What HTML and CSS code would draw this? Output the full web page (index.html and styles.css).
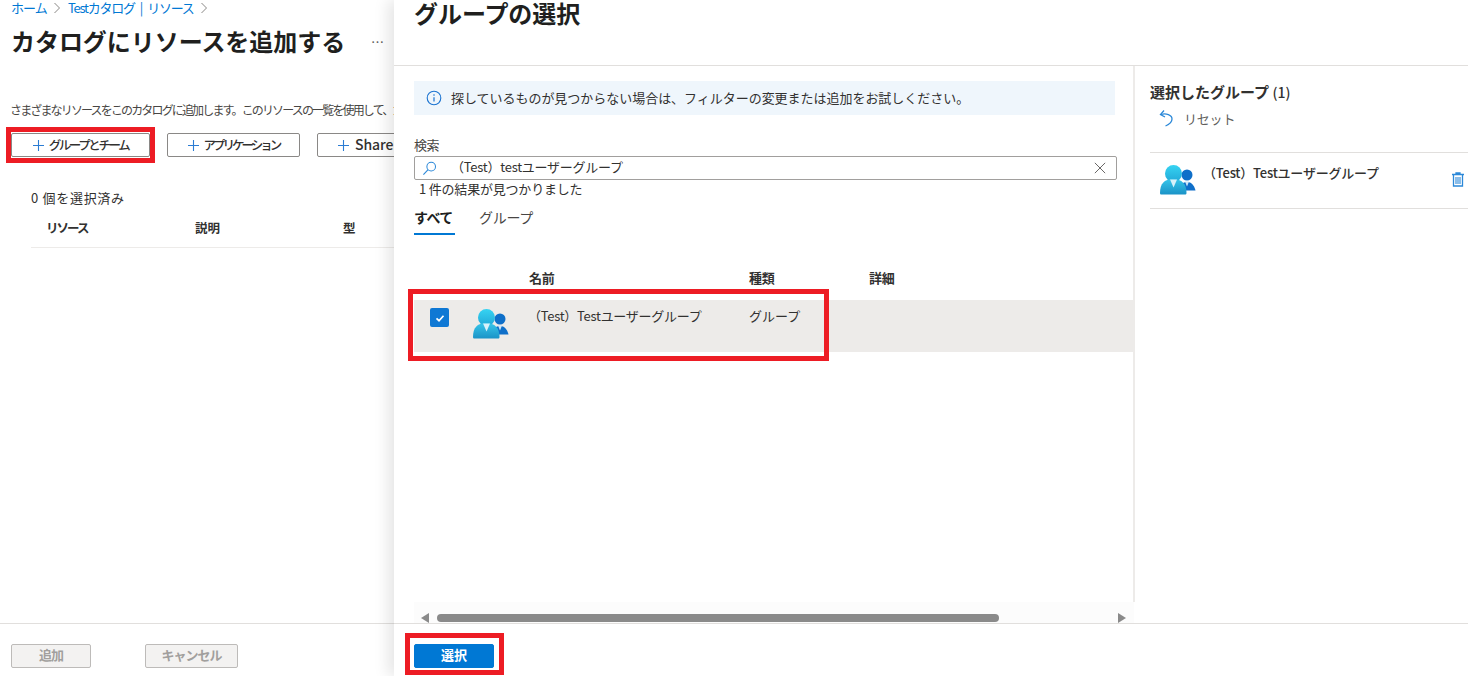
FILE: index.html
```html
<!DOCTYPE html>
<html lang="ja">
<head>
<meta charset="utf-8">
<title>カタログにリソースを追加する</title>
<link rel="stylesheet" href="styles.css">
</head>
<body>
<svg class="defs" width="0" height="0" aria-hidden="true">
  <defs>
    <linearGradient id="bodyGrad" x1="0" y1="0" x2="0" y2="1"><stop offset="0" stop-color="#37c6ea"/><stop offset="1" stop-color="#1b93c7"/></linearGradient>
    <linearGradient id="headGrad" x1="0" y1="0" x2="0" y2="1"><stop offset="0" stop-color="#36d3f2"/><stop offset="1" stop-color="#22a9d8"/></linearGradient>
    <symbol id="people" viewBox="0 0 36 30">
      <circle cx="27" cy="10" r="5.500" fill="#0f6fc9"/>
      <path d="M20 25c0-5 2.500-8 7-8s7 3 8.500 8.500H20z" fill="#0f6fc9"/>
      <path d="M25 16.500h4l-2 5z" fill="#cfe6f7"/>
      <circle cx="13.500" cy="8.500" r="8.500" fill="url(#headGrad)"/>
      <path d="M0 28c0-9 4-14 13-14s13.500 5 13.500 14c0 1-.6 1.500-1.500 1.500H1.500C.5 29.500 0 29 0 28z" fill="url(#bodyGrad)"/>
      <path d="M10 14.500h7l-3.500 8z" fill="#d9f1fa"/>
    </symbol>
    <symbol id="plus" viewBox="0 0 11 11"><path d="M5.500 0v11M0 5.500h11" stroke="#2b7cd3" stroke-width="1.100"/></symbol>
  </defs>
</svg>

<main class="blade">
  <section class="left">
    <nav class="crumbs">
      <a>ホーム</a><svg class="chev" viewBox="0 0 8 12"><path d="M1.500 1l5 5-5 5" fill="none" stroke="#8a8886"/></svg><a class="crumb-wide">Testカタログ | リソース</a><svg class="chev" viewBox="0 0 8 12"><path d="M1.500 1l5 5-5 5" fill="none" stroke="#8a8886"/></svg>
    </nav>
    <div class="title-row">
      <h1 class="title">カタログにリソースを追加する</h1>
      <span class="more">…</span>
    </div>
    <div class="left-body">
      <p class="desc">さまざまなリソースをこのカタログに追加します。このリソースの一覧を使用して、カタログのリソースを管理します。</p>
      <div class="actions">
        <button class="act act-group"><svg class="plus"><use href="#plus"/></svg><span class="act-label">グループとチーム</span></button>
        <button class="act act-app"><svg class="plus"><use href="#plus"/></svg><span class="act-label">アプリケーション</span></button>
        <button class="act act-share"><svg class="plus"><use href="#plus"/></svg><span class="act-label">SharePoint サイト</span></button>
      </div>
      <div class="selected">0 個を選択済み</div>
      <div class="res-head">
        <span class="rh-a">リソース</span><span class="rh-b">説明</span><span class="rh-c">型</span>
      </div>
    </div>
    <footer class="left-foot">
      <button class="off off-add">追加</button>
      <button class="off off-cancel">キャンセル</button>
    </footer>
  </section>

  <section class="panel">
    <h2 class="panel-title">グループの選択</h2>
    <div class="panel-main">
      <div class="pick">
        <div class="pick-inner">
          <div class="info">
            <svg class="info-ic" viewBox="0 0 16 16"><circle cx="8" cy="8" r="6.800" fill="none" stroke="#1a73d0" stroke-width="1.100"/><circle cx="8" cy="5" r=".8" fill="#1a73d0"/><path d="M8 7.200v4.300" stroke="#1a73d0" stroke-width="1.200"/></svg>
            <span class="info-text">探しているものが見つからない場合は、フィルターの変更または追加をお試しください。</span>
          </div>
          <label class="search-label">検索</label>
          <div class="search">
            <svg class="search-ic" viewBox="0 0 16 16"><circle cx="9.800" cy="6" r="4.600" fill="none" stroke="#2b88d8" stroke-width="1.100"/><path d="M6.500 9.300L1.500 14.500" stroke="#2b88d8" stroke-width="1.200"/></svg>
            <span class="search-text">（Test）testユーザーグループ</span>
            <svg class="close-ic" viewBox="0 0 14 14"><path d="M1 1l12 12M13 1L1 13" stroke="#605e5c" stroke-width="1.100"/></svg>
          </div>
          <div class="count">1 件の結果が見つかりました</div>
          <div class="tabs">
            <span class="tab tab-on">すべて</span>
            <span class="tab">グループ</span>
          </div>
        </div>
        <div class="thead">
          <span class="c-name">名前</span><span class="c-kind">種類</span><span class="c-detail">詳細</span>
        </div>
        <div class="row">
          <span class="check"><svg viewBox="0 0 12 12"><path d="M2.500 6.300l2.500 2.400 4.500-5" fill="none" stroke="#fff" stroke-width="1.700"/></svg></span>
          <svg class="row-ic"><use href="#people"/></svg>
          <span class="row-name">（Test）Testユーザーグループ</span>
          <span class="row-kind">グループ</span>
        </div>
      </div>
      <aside class="chosen">
        <h3 class="chosen-title">選択したグループ <span class="chosen-num">(1)</span></h3>
        <div class="reset">
          <svg class="reset-ic" viewBox="0 0 16 18"><path d="M5 1.500L1.500 5.500 6 8" fill="none" stroke="#2b88d8" stroke-width="1.300"/><path d="M2 5.500c5-1.500 11 .5 11 4.500 0 3-3 5.500-6.500 7" fill="none" stroke="#2b88d8" stroke-width="1.300"/></svg>
          <span>リセット</span>
        </div>
        <div class="chosen-item">
          <svg class="chosen-ic"><use href="#people"/></svg>
          <span class="chosen-name">（Test）Testユーザーグループ</span>
          <svg class="trash" viewBox="0 0 14 16"><path d="M1 3h12M5 3V1.500h4V3M2.500 3v11.500h9V3" fill="none" stroke="#2b88d8" stroke-width="1.300"/><path d="M5 5.500v7M7 5.500v7M9 5.500v7" stroke="#2b88d8" stroke-width="1.100"/></svg>
        </div>
      </aside>
    </div>
    <div class="hscroll">
      <svg class="arr" viewBox="0 0 8 10"><path d="M8 0v10L0 5z" fill="#8a8a8a"/></svg>
      <span class="track"><span class="thumb"></span></span>
      <svg class="arr" viewBox="0 0 8 10"><path d="M0 0v10l8-5z" fill="#8a8a8a"/></svg>
    </div>
    <footer class="panel-foot">
      <button class="primary">選択</button>
    </footer>
  </section>
</main>

<div class="mark mark-a"></div>
<div class="mark mark-b"></div>
<div class="mark mark-c"></div>
</body>
</html>
```

FILE: styles.css
```css
* { box-sizing: border-box; }
html, body { margin: 0; padding: 0; height: 100%; overflow: hidden; background: #fff; }
body {
  font-family: "Noto Sans CJK JP", "Noto Sans", sans-serif;
  color: #323130;
  position: relative;
}
.defs { position: absolute; }
button { font-family: inherit; margin: 0; cursor: default; }

.blade { display: flex; height: 676px; }

/* left blade */
.left { width: 394px; flex: none; display: flex; flex-direction: column; overflow: hidden; }
.crumbs { display: flex; align-items: center; height: 16px; padding-left: 11px; font-size: 13px; line-height: 16px; color: #0078d4; white-space: nowrap; letter-spacing: -0.9px; }
.crumb-wide { letter-spacing: -1.250px; word-spacing: 3.500px; }
.chev { width: 8px; height: 12px; margin: 0 7px 0 6px; }
.title-row { display: flex; align-items: center; height: 34px; margin-top: 8px; padding-left: 11px; white-space: nowrap; }
.title { margin: 0; font-size: 24px; line-height: 34px; font-weight: 700; color: #201f1e; letter-spacing: -0.05px; }
.more { margin-left: 26px; font-size: 13px; color: #605e5c; }
.left-body { flex: 1; min-height: 0; padding-top: 43px; }
.desc { margin: 0 0 0 10px; font-size: 12px; line-height: 18px; white-space: nowrap; letter-spacing: -1.85px; color: #484644; }
.actions { display: flex; gap: 17px; margin-top: 14px; padding-left: 11px; white-space: nowrap; }
.act { flex: none; height: 24px; padding: 0; display: flex; align-items: center; justify-content: center; gap: 5px; background: #fff; border: 1px solid #8a8886; border-radius: 2px; font-size: 12.500px; font-weight: 500; color: #323130; white-space: nowrap; }
.act-label { padding-bottom: 2px; letter-spacing: -2.400px; }
.plus { width: 11px; height: 11px; flex: none; }
.act-group { width: 139px; }
.act-app { width: 133px; }
.act-app .act-label { letter-spacing: -3px; }
.act-share { width: 170px; justify-content: flex-start; padding-left: 20px; gap: 6px; }
.act-share .act-label { font-size: 14px; letter-spacing: -0.1px; }
.selected { margin: 32px 0 0 31px; font-size: 13px; line-height: 18px; letter-spacing: 0.7px; color: #323130; }
.res-head { display: flex; margin-left: 31px; height: 41px; align-items: center; padding-left: 15px; border-bottom: 1px solid #edebe9; font-size: 12.500px; font-weight: 700; color: #323130; }
.rh-a { width: 149px; letter-spacing: -2px; }
.rh-b { width: 148px; }
.left-foot { height: 53px; flex: none; border-top: 1px solid #e1dfdd; display: flex; align-items: flex-start; padding: 20px 0 0 11px; gap: 54px; }
.off { height: 24px; background: #f3f2f1; border: 1px solid #bdbbb9; border-radius: 2px; color: #a19f9d; font-size: 13px; font-weight: 700; padding: 0 0 3px; letter-spacing: -1px; }
.off-add { width: 80px; }
.off-cancel { width: 93px; }

/* selection panel */
.panel { flex: 1; min-width: 0; display: flex; flex-direction: column; box-shadow: -6px 0 14px rgba(0,0,0,.1); position: relative; background: #fff; }
.panel-title { flex: none; margin: 0; height: 66px; padding: 0 0 0 20px; font-size: 24px; line-height: 26px; font-weight: 700; color: #201f1e; letter-spacing: -0.05px; border-bottom: 1px solid #e1dfdd; }
.panel-main { flex: 1; min-height: 0; display: flex; }
.pick { width: 741px; flex: none; border-right: 2px solid #edebe9; }
.pick-inner { padding: 15px 0 0 20px; }
.info { width: 701px; height: 34px; display: flex; align-items: center; padding-left: 12px; background: #eff6fc; font-size: 13px; color: #323130; letter-spacing: -0.03px; }
.info-text { padding-bottom: 2px; }
.info-ic { width: 16px; height: 16px; margin-right: 9px; flex: none; }
.search-label { display: block; margin-top: 20px; font-size: 13px; line-height: 19px; letter-spacing: -0.4px; color: #484644; }
.search { width: 703px; height: 24px; margin-top: 2px; display: flex; align-items: center; border: 1px solid #a19f9d; border-radius: 2px; padding-left: 7px; }
.search-ic { width: 15px; height: 15px; flex: none; }
.search-text { flex: 1; margin: 0 0 3px 14px; font-size: 13px; line-height: 18px; letter-spacing: -0.25px; color: #323130; white-space: nowrap; }
.close-ic { width: 12px; height: 12px; margin-right: 10px; flex: none; }
.count { margin: -1px 0 0 5px; font-size: 13px; line-height: 19px; letter-spacing: -0.2px; color: #323130; }
.tabs { display: flex; gap: 24px; margin-top: 9px; height: 28px; }
.tab { font-size: 14px; line-height: 20px; height: 28px; letter-spacing: -0.3px; color: #484644; }
.tab-on { width: 41px; font-weight: 700; color: #201f1e; border-bottom: 2px solid #0078d4; white-space: nowrap; letter-spacing: -0.6px; }
.thead { display: flex; height: 65px; padding: 33px 0 0 135px; font-size: 13px; line-height: 20px; font-weight: 700; color: #323130; letter-spacing: -0.3px; }
.c-name { width: 220px; }
.c-kind { width: 120px; }
.row { position: relative; height: 52px; background: #edebe9; margin-left: 20px; display: flex; align-items: flex-start; }
.check { flex: none; width: 19px; height: 19px; margin: 8px 0 0 16px; background: #0f78d4; border-radius: 2px; display: flex; align-items: center; justify-content: center; }
.check svg { width: 12px; height: 12px; }
.row-ic { flex: none; width: 36px; height: 30px; margin: 9px 0 0 24px; }
.row-name { flex: none; width: 221px; margin: 6px 0 0 19px; font-size: 13px; line-height: 20px; letter-spacing: -0.28px; white-space: nowrap; color: #323130; }
.row-kind { font-size: 13px; margin-top: 6px; line-height: 20px; letter-spacing: 0; color: #323130; }
.chosen { flex: 1; min-width: 0; padding: 15px 0 0 15px; overflow: hidden; }
.chosen-title { margin: 0; font-size: 15px; line-height: 22px; font-weight: 700; letter-spacing: 0; color: #323130; }
.chosen-num { font-weight: 500; font-size: 14px; }
.reset { display: flex; align-items: center; height: 18px; margin: 6px 0 0 9px; font-size: 13px; letter-spacing: -0.2px; color: #605e5c; }
.reset-ic { width: 16px; height: 18px; margin-right: 9px; }
.chosen-item { display: flex; align-items: flex-start; height: 57px; margin-top: 25px; border-top: 1px solid #e1dfdd; border-bottom: 1px solid #e1dfdd; }
.chosen-ic { flex: none; width: 36px; height: 30px; margin: 12px 0 0 10px; }
.chosen-name { flex: none; width: 248px; margin: 10px 0 0 7px; font-size: 13px; line-height: 20px; font-weight: 500; letter-spacing: -0.22px; white-space: nowrap; color: #323130; }
.trash { width: 14px; height: 17px; margin: 18px 0 0 0; flex: none; }
.hscroll { flex: none; height: 21px; width: 720px; margin-left: 20px; display: flex; align-items: flex-end; gap: 8px; padding: 0 8px 1px 7px; background: #fcfcfc; }
.arr { width: 8px; height: 10px; flex: none; margin-bottom: -1px; }
.track { flex: 1; height: 8px; }
.thumb { display: block; width: 562px; height: 8px; border-radius: 4px; background: #8a8a8a; }
.panel-foot { flex: none; height: 53px; border-top: 1px solid #e1dfdd; padding: 20px 0 0 20px; display: flex; align-items: flex-start; }
.primary { width: 80px; height: 24px; padding: 0 0 3px; background: #0078d4; border: 1px solid #0078d4; border-radius: 2px; color: #fff; font-size: 13px; font-weight: 700; }

/* red annotations drawn over the screenshot */
.mark { position: absolute; border: 5px solid #ed1c24; pointer-events: none; }
.mark-a { left: 6px; top: 127px; width: 149px; height: 36px; }
.mark-b { left: 408px; top: 289px; width: 421px; height: 72px; }
.mark-c { left: 405px; top: 633px; width: 99px; height: 42px; }
```
